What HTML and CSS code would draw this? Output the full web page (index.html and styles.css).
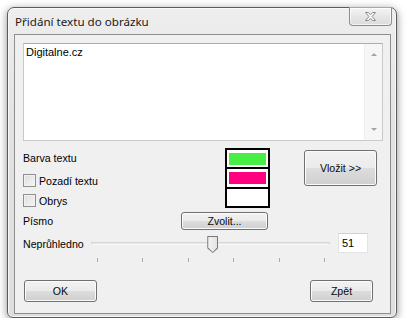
FILE: index.html
```html
<!DOCTYPE html>
<html lang="cs">
<head>
  <meta charset="UTF-8">
  <title>Přidání textu do obrázku</title>
  <link rel="stylesheet" href="styles.css">
</head>
<body>
  <div class="window">
    <div class="titlebar">
      <span class="title">Přidání textu do obrázku</span>
      <button class="close" title="Zavřít">
        <svg width="13" height="9" viewBox="0 0 13 9">
          <path d="M1.5 0.5 H4.5 L6.5 2.8 L8.5 0.5 H11.5 L8 4.5 L11.5 8.5 H8.5 L6.5 6.2 L4.5 8.5 H1.5 L5 4.5 Z" fill="#fff" stroke="#8a8a8a" stroke-width="1"/>
        </svg>
      </button>
    </div>

    <div class="client">
      <div class="textbox">
        <div class="text">Digitalne.cz</div>
        <div class="scrollbar">
          <span class="arrow up"></span>
          <span class="arrow down"></span>
        </div>
      </div>

      <div class="options">
        <span class="label color-label">Barva textu</span>
        <label class="check bg-check"><span class="box"></span>Pozadí textu</label>
        <label class="check outline-check"><span class="box"></span>Obrys</label>

        <div class="swatches">
          <div class="swatch"><span class="fill green"></span></div>
          <div class="swatch"><span class="fill pink"></span></div>
          <div class="swatch"></div>
        </div>

        <button class="btn insert">Vložit &gt;&gt;</button>

        <span class="label font-label">Písmo</span>
        <button class="btn choose">Zvolit...</button>
      </div>

      <div class="opacity">
        <span class="label">Neprůhledno</span>
        <div class="slider" style="--value: 51">
          <div class="track"></div>
          <div class="thumb"></div>
          <div class="ticks">
            <span></span><span></span><span></span><span></span><span></span><span></span>
          </div>
        </div>
        <div class="value">51</div>
      </div>

      <div class="footer">
        <button class="btn ok">OK</button>
        <button class="btn back">Zpět</button>
      </div>
    </div>
  </div>
</body>
</html>
```

FILE: styles.css
```css
body {
    margin: 0;
    background: #fff;
    font-family: "Liberation Sans", Arial, sans-serif;
    font-size: 10.6px;
    color: #000;
}

.window {
    position: relative;
    margin: 7px 0 0 7px;
    width: 377px;
    height: 306px;
    padding: 0 5px 3px 6px;
    border: 1px solid #5b5b5b;
    border-radius: 7px 7px 6px 6px;
    background: linear-gradient(#eeeeee, #e2e2e2 40%, #dedede);
    box-shadow: 0 2px 8px rgba(0, 0, 0, 0.45), inset 0 0 0 1px #f8f8f8;
}

.titlebar {
    height: 26px;
    display: flex;
    align-items: center;
}

.title {
    padding-left: 1px;
    font-family: "Noto Sans", sans-serif;
    font-size: 11.6px;
    color: #1a1a1a;
    margin-top: 1px;
}

.close {
    position: absolute;
    top: -1px;
    right: 4px;
    width: 43px;
    height: 19px;
    padding: 0;
    border: 1px solid #8c8c8c;
    border-top-color: #a8a8a8;
    border-radius: 0 0 4px 4px;
    background: linear-gradient(#f4f4f4, #e6e6e6 50%, #dcdcdc);
    box-shadow: inset 0 0 0 1px rgba(255, 255, 255, 0.7);
    display: flex;
    align-items: center;
    justify-content: center;
}

.client {
    height: 280px;
    border: 1px solid #8e8e8e;
    background: #f0f0f0;
    padding: 8px 0 0 8px;
    box-sizing: border-box;
}

/* text box */
.textbox {
    width: 360px;
    height: 98px;
    border: 1px solid #c8c9cc;
    border-top-color: #abadb3;
    background: #fff;
    box-sizing: border-box;
    display: flex;
}

.text {
    flex: 1;
    padding: 2px 2px;
    font-size: 11px;
}

.scrollbar {
    width: 17px;
    background: #f6f6f6;
    border-left: 1px solid #f0f0f0;
    display: flex;
    flex-direction: column;
    justify-content: space-between;
    align-items: center;
    padding: 9px 0 9px;
}

.arrow {
    width: 0;
    height: 0;
    border-left: 3px solid transparent;
    border-right: 3px solid transparent;
}

.arrow.up {
    border-bottom: 3px solid #a3a3a3;
}

.arrow.down {
    border-top: 3px solid #a3a3a3;
}

/* options grid */
.options {
    margin-top: 7px;
    display: grid;
    grid-template-columns: 158px 44px 45px 34px 73px;
    grid-template-rows: 20px 20px 20px 22px;
}

.label {
    display: flex;
    align-items: center;
}

.color-label {
    grid-column: 1;
    grid-row: 1;
    padding-bottom: 1px;
}

.check {
    display: flex;
    align-items: center;
    gap: 3px;
    grid-column: 1;
}

.bg-check {
    grid-row: 2;
    padding-top: 5px;
}

.outline-check {
    grid-row: 3;
    padding-top: 5px;
}

.box {
    width: 11px;
    height: 11px;
    border: 1px solid #8e8f8f;
    background: linear-gradient(135deg, #dcdcdc, #f7f7f7);
    box-shadow: inset 0 0 0 1px #f2f2f2;
}

.swatches {
    grid-column: 3;
    grid-row: 1 / 4;
    border: 1px solid #000;
    display: flex;
    flex-direction: column;
}

.swatch {
    flex: 1;
    border: 1px solid #000;
    background: #fff;
    padding: 3px 2px 1px 2px;
    display: flex;
}

.fill {
    flex: 1;
    height: 12px;
}

.green {
    background: #46ee46;
}

.pink {
    background: #ff0080;
}

/* buttons */
.btn {
    font-family: "Liberation Sans", Arial, sans-serif;
    font-size: 10.6px;
    color: #0a0a0a;
    border: 1px solid #707070;
    border-radius: 3px;
    background: linear-gradient(#f2f2f2, #ebebeb 49%, #dddddd 50%, #cfcfcf);
    box-shadow: inset 0 0 0 1px #fbfbfb;
    padding: 0;
    cursor: pointer;
}

.insert {
    grid-column: 5;
    grid-row: 1 / 3;
    margin-top: 2px;
    height: 36px;
}

.font-label {
    grid-column: 1;
    grid-row: 4;
    padding-top: 3px;
}

.choose {
    grid-column: 2 / 5;
    grid-row: 4;
    justify-self: start;
    width: 87px;
    height: 18px;
    margin-top: 4px;
}

/* opacity slider */
.opacity {
    margin-top: 3px;
    display: flex;
    align-items: flex-start;
    height: 30px;
}

.opacity .label {
    width: 63px;
    height: 20px;
    padding-top: 1px;
}

.slider {
    position: relative;
    width: 249px;
    height: 30px;
}

.track {
    position: absolute;
    left: 5px;
    right: 5px;
    top: 9px;
    height: 1px;
    border: 1px solid #d6d6d6;
    border-bottom-color: #f8f8f8;
    background: #e7eaea;
}

.thumb {
    position: absolute;
    top: 3px;
    left: calc(5px + (100% - 21px) * var(--value) / 100);
    width: 11px;
    height: 17px;
}

.thumb::before {
    content: "";
    position: absolute;
    inset: 0;
    background: #7a7a7a;
    clip-path: polygon(0 0, 100% 0, 100% 72%, 50% 100%, 0 72%);
}

.thumb::after {
    content: "";
    position: absolute;
    inset: 1px;
    background: linear-gradient(90deg, #f4f4f4, #e2e2e2);
    clip-path: polygon(0 0, 100% 0, 100% 70%, 50% 100%, 0 70%);
}

.ticks {
    position: absolute;
    left: 11px;
    right: 10px;
    top: 25px;
    display: flex;
    justify-content: space-between;
}

.ticks span {
    width: 1px;
    height: 4px;
    background: #a9a9a9;
}

.value {
    margin-left: 3px;
    width: 30px;
    height: 20px;
    border: 1px solid #e3e3e3;
    border-top-color: #d0d0d0;
    background: #fff;
    box-sizing: border-box;
    padding: 3px 0 0 3px;
    font-size: 11px;
}

/* bottom buttons */
.footer {
    margin-top: 17px;
    display: flex;
    justify-content: space-between;
    padding: 0 17px 0 1px;
}

.ok {
    width: 73px;
    height: 22px;
}

.back {
    width: 63px;
    height: 22px;
}
```
